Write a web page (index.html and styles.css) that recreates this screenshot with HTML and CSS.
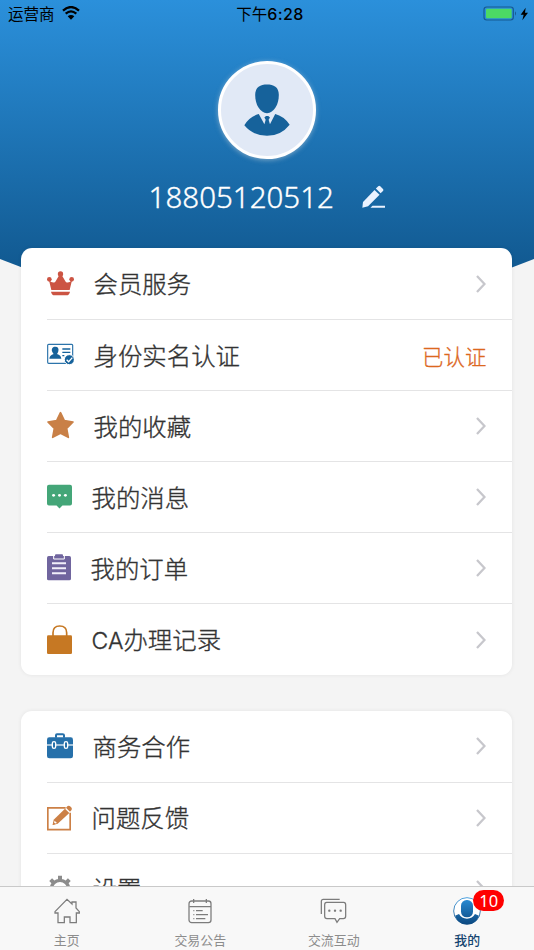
FILE: index.html
```html
<!DOCTYPE html>
<html lang="zh-CN">
<head>
<meta charset="utf-8">
<title>我的</title>
<link rel="stylesheet" href="styles.css">
</head>
<body>
<div class="screen">
  <main class="content">
    <header class="hero">
      <div class="status">
        <div class="carrier">运营商
          <svg class="wifi" viewBox="0 0 54 42"><path d="M3 14Q27-8 51 14M11 23Q27 9 43 23" fill="none" stroke="#000" stroke-width="6.5"/><path d="M17 31Q27 23 37 31L27 41Z"/></svg>
        </div>
        <div class="time">下午<span>6:28</span></div>
        <div class="power">
          <svg class="battery" viewBox="0 0 136 45"><rect x="2" y="3" width="88" height="39" rx="8" fill="none" stroke="#175a91" stroke-width="3.500"/><rect x="8" y="8" width="77" height="29" rx="3" fill="#4cd964"/><path d="M95 16q6 6 0 13z" fill="#175a91"/><path d="M127 5L112 26H121L117 43L134 20H125Z"/></svg>
        </div>
      </div>
      <div class="avatar">
        <svg viewBox="0 0 140 160"><g fill="#16629b"><path d="M70 1C90 1 106 8 106 33C106 62 91 88 70 88C49 88 34 62 34 33C34 8 50 1 70 1Z"/><path d="M45 91L62 122L66 108L62 101L67 97H74L79 101L75 108L79 122L95 91Q120 97 139 123Q112 157 70 157Q27 157 1 125Q17 98 45 91Z"/></g></svg>
      </div>
      <div class="phone">
        <span>18805120512</span>
        <svg class="pen" viewBox="0 0 68 70"><g fill="#eaf2ff"><path d="M1 67L3 50L37 14L52 28L18 62Z"/><path d="M41 10L48 3Q51 1 54 3L62 11Q65 14 62 17L55 24Z"/><path d="M31 61H68V67H25Z"/></g></svg>
      </div>
    </header>

    <section class="card">
      <div class="row">
        <svg class="icon w27" viewBox="0 0 81 90"><g fill="#cc5443"><circle cx="40.500" cy="15" r="8"/><circle cx="7" cy="31" r="7"/><circle cx="74" cy="31" r="7"/><path d="M6 34L13 63H68L75 34Q63 45 56 38L44 18H37L25 38Q18 45 6 34Z"/><path d="M12 68H69Q67 79 58 79H23Q14 79 12 68Z"/></g></svg>
        <span class="label">会员服务</span>
        <svg class="chev" viewBox="0 0 10 18"><path d="M1 1L8.500 9L1 17"/></svg>
      </div>
      <div class="row">
        <svg class="icon w27" viewBox="0 0 81 90"><rect x="2" y="13" width="75" height="57" rx="3" fill="#fff" stroke="#2c74ab" stroke-width="3.500"/><g fill="#16629b"><path d="M25 20C33 20 36 26 34 34Q32 40 30 42Q42 46 43 56H7Q8 46 20 42Q17 39 15 34C13 26 17 20 25 20Z"/><path d="M46 25H70V29H46ZM46 35H70V39H46ZM46 45H52V49H46Z"/><circle cx="67" cy="59" r="15" stroke="#fff" stroke-width="3"/></g><path d="M59 59L65 65L76 53" fill="none" stroke="#fff" stroke-width="4"/></svg>
        <span class="label">身份实名认证</span>
        <span class="state">已认证</span>
      </div>
      <div class="row">
        <svg class="icon w27" viewBox="0 0 81 90"><path d="M40.500 5L52 29L78 33L59 52L64 79L40.500 67L17 79L22 52L3 33L29 29Z" fill="#c98047" stroke="#c98047" stroke-width="5" stroke-linejoin="round"/></svg>
        <span class="label">我的收藏</span>
        <svg class="chev" viewBox="0 0 10 18"><path d="M1 1L8.500 9L1 17"/></svg>
      </div>
      <div class="row">
        <svg class="icon w25" viewBox="0 0 76 90"><path d="M6 8H70Q76 8 76 14V65Q76 71 70 71H47L38 80L29 71H6Q0 71 0 65V14Q0 8 6 8Z" fill="#44a678"/><g fill="#fff"><circle cx="20" cy="40" r="4.500"/><circle cx="38" cy="40" r="4.500"/><circle cx="56" cy="40" r="4.500"/></g></svg>
        <span class="label">我的消息</span>
        <svg class="chev" viewBox="0 0 10 18"><path d="M1 1L8.500 9L1 17"/></svg>
      </div>
      <div class="row">
        <svg class="icon w24" viewBox="0 0 72 90"><rect y="9" width="72" height="73" rx="5" fill="#70659e"/><path d="M20 8V18H52V8" fill="none" stroke="#fff" stroke-width="3"/><rect x="24" y="4" width="24" height="11" rx="3" fill="#70659e"/><path d="M15 31H57M15 46H57M15 61H57" stroke="#f1effa" stroke-width="6"/></svg>
        <span class="label">我的订单</span>
        <svg class="chev" viewBox="0 0 10 18"><path d="M1 1L8.500 9L1 17"/></svg>
      </div>
      <div class="row">
        <svg class="icon w25" viewBox="0 0 75 90"><rect y="31" width="75" height="56" rx="4" fill="#c67823"/><path d="M18 34V23Q18 3 38 3Q59 3 59 23V34" fill="none" stroke="#c67823" stroke-width="5"/></svg>
        <span class="label"><span class="latin">CA</span>办理记录</span>
        <svg class="chev" viewBox="0 0 10 18"><path d="M1 1L8.500 9L1 17"/></svg>
      </div>
    </section>

    <section class="card">
      <div class="row">
        <svg class="icon w26" viewBox="0 0 78 90"><g fill="#2670aa"><path d="M24 20V13Q24 7 30 7H47Q54 7 54 13V20H48V13H30V20Z"/><rect y="19" width="78" height="63" rx="7"/></g><path d="M0 42H78" stroke="#fff" stroke-width="3.500"/><g fill="#2670aa" stroke="#fff" stroke-width="4"><rect x="16" y="32" width="10" height="20" rx="5"/><rect x="52" y="32" width="10" height="20" rx="5"/></g></svg>
        <span class="label">商务合作</span>
        <svg class="chev" viewBox="0 0 10 18"><path d="M1 1L8.500 9L1 17"/></svg>
      </div>
      <div class="row">
        <svg class="icon w25" viewBox="0 0 75 90"><path d="M56 14.500H2.500V80H69.500V29" fill="none" stroke="#cc8046" stroke-width="5"/><path d="M17 66L20 50L54 17L67 30L32 62Z" fill="#cc8046"/><path d="M23 53L30 60L19 64Z" fill="#fff"/><path d="M19 56L26 63L17 66Z" fill="#cc8046"/><path d="M57 14L62 9Q66 6 71 11Q77 16 73 22L69 26Z" fill="#cc8046"/></svg>
        <span class="label">问题反馈</span>
        <svg class="chev" viewBox="0 0 10 18"><path d="M1 1L8.500 9L1 17"/></svg>
      </div>
      <div class="row">
        <svg class="icon w26" viewBox="0 0 78 90"><g stroke="#8c8c8c" stroke-width="12"><path d="M39 5V85M1 45H77M11 17L67 73M67 17L11 73"/></g><circle cx="39" cy="45" r="26" fill="#fff" stroke="#8c8c8c" stroke-width="10"/></svg>
        <span class="label">设置</span>
        <svg class="chev" viewBox="0 0 10 18"><path d="M1 1L8.500 9L1 17"/></svg>
      </div>
    </section>
  </main>

  <nav class="tabs">
    <div class="tab">
      <svg viewBox="0 0 84 84"><path d="M6 44L42 7L57 21V15H69V33L79 44V48H70V77H51V60H34V77H15V48H6Z"/></svg>
      <span>主页</span>
    </div>
    <div class="tab">
      <svg viewBox="0 0 84 84"><rect x="9" y="12" width="66" height="65" rx="8"/><path d="M10 29H75M23 6V18M61 6V18M30 41H50M30 53H66M30 65H58M22 41H25M22 53H25M22 65H25"/></svg>
      <span>交易公告</span>
    </div>
    <div class="tab">
      <svg viewBox="0 0 84 84"><path d="M4 51V13Q4 7 10 7H59M20 16H71Q77 16 77 23V58Q77 65 70 65H59L51 76L45 65H21Q14 65 14 58V23Q14 16 20 16Z"/><g class="dots"><circle cx="28" cy="41" r="3.500"/><circle cx="45" cy="41" r="3.500"/><circle cx="62" cy="41" r="3.500"/></g></svg>
      <span>交流互动</span>
    </div>
    <div class="tab active">
      <div class="tab-icon">
        <svg class="me" viewBox="0 0 84 84"><defs><linearGradient id="blue" x1="0" y1="0" x2="0" y2="84" gradientUnits="userSpaceOnUse"><stop stop-color="#2c91db"/><stop offset="1" stop-color="#0b477e"/></linearGradient></defs><circle cx="42" cy="42" r="40" fill="#fff" stroke="url(#blue)" stroke-width="2.500"/><path d="M6 56L18 51Q26 65 42 65Q58 65 66 51L78 56Q69 82 42 82Q15 82 6 56Z" fill="url(#blue)"/><rect x="24" y="9" width="36" height="52" rx="17" fill="url(#blue)"/></svg>
        <b class="badge">10</b>
      </div>
      <span>我的</span>
    </div>
  </nav>
</div>
</body>
</html>
```
FILE: styles.css
```css
* { box-sizing: border-box; }

body {
  margin: 0;
  font-family: Inter, "Noto Sans CJK SC", sans-serif;
  color: #333;
  background: #f4f4f4;
}

svg { display: block; flex: none; }

.screen {
  display: flex;
  flex-direction: column;
  height: 950px;
  overflow: hidden;
}

.content {
  flex: 1;
  min-height: 0;
  overflow: hidden;
}

.hero {
  display: flex;
  flex-direction: column;
  align-items: center;
  height: 300px;
  margin-bottom: -52px;
  background: linear-gradient(#2b90db, #125b93 260px);
  clip-path: polygon(0 0, 100% 0, 100% 259px, 80% 300px, 20% 300px, 0 259px);
}

.status {
  display: grid;
  grid-template-columns: 1fr auto 1fr;
  align-items: center;
  width: 100%;
  height: 26px;
  padding: 0 5px 0 8px;
  color: #000;
  font-size: 15.5px;
}

.carrier { display: flex; align-items: center; gap: 7px; }
.wifi { width: 18px; height: 14px; }
.time { padding-left: 3px; }
.time span { font-weight: 500; font-size: 16px; letter-spacing: .4px; }
.power { display: flex; justify-content: flex-end; }
.battery { width: 46px; height: 15px; }

.avatar {
  display: flex;
  align-items: center;
  justify-content: center;
  width: 98px;
  height: 98px;
  margin-top: 35px;
  border: 3.5px solid #fff;
  border-radius: 50%;
  background: #e1e9f6;
  box-shadow: 0 1px 5px rgba(225, 225, 225, .5);
}

.avatar svg { width: 46px; height: 53px; }

.phone {
  display: flex;
  align-items: center;
  gap: 28.5px;
  height: 40px;
  margin-top: 18px;
  color: #fff;
  font: 300 29.5px/40px "Noto Sans", sans-serif;
  -webkit-text-stroke: .35px;
}

.pen { width: 23px; height: 24px; }

.card {
  position: relative;
  width: 491px;
  margin: 0 0 36px 21.3px;
  border-radius: 11px;
  background: #fff;
  box-shadow: 0 0 4px rgba(0, 0, 0, .07);
}

.row {
  display: flex;
  align-items: center;
  height: 71.1px;
  margin-left: 25.7px;
  padding-right: 26px;
}

.row + .row { border-top: 1px solid #e4e4e5; }

.icon { height: 30px; }
.w24 { width: 24px; }
.w25 { width: 25px; }
.w26 { width: 26px; }
.w27 { width: 27px; }

.label {
  flex: 1;
  margin-left: 19.6px;
  padding-top: 1px;
  font-size: 24.4px;
  font-weight: 300;
  line-height: 36px;
  white-space: nowrap;
  -webkit-text-stroke: .35px;
}

.latin { font-size: 23px; }

.state {
  color: #dc681f;
  font-size: 21.4px;
  font-weight: 300;
  -webkit-text-stroke: .3px;
}

.chev {
  width: 10px;
  height: 18px;
  fill: none;
  stroke: #c7c7cc;
  stroke-width: 2.3;
}

.tabs {
  position: relative;
  display: grid;
  grid-template-columns: repeat(4, 1fr);
  height: 64px;
  border-top: 1px solid #c9c9c9;
  background: #f8f8f8;
}

.tab {
  display: flex;
  flex-direction: column;
  align-items: center;
  padding-top: 10px;
  color: #8c8c8c;
  font-size: 12.9px;
  line-height: 20px;
}

.tab svg {
  width: 28px;
  height: 28px;
  margin-bottom: 6px;
  fill: none;
  stroke: #7c7c7c;
  stroke-width: 3.8;
}

.tab .dots { fill: #7c7c7c; stroke: none; }
.tab .me { stroke: none; }
.active { color: #154570; font-weight: 500; }
.tab-icon { position: relative; }

.badge {
  position: absolute;
  left: 20px;
  top: -7px;
  width: 31px;
  height: 21px;
  border-radius: 11px;
  background: #f00;
  color: #fff;
  font: 400 16.5px/21px "Noto Sans", sans-serif;
  text-align: center;
}
```
